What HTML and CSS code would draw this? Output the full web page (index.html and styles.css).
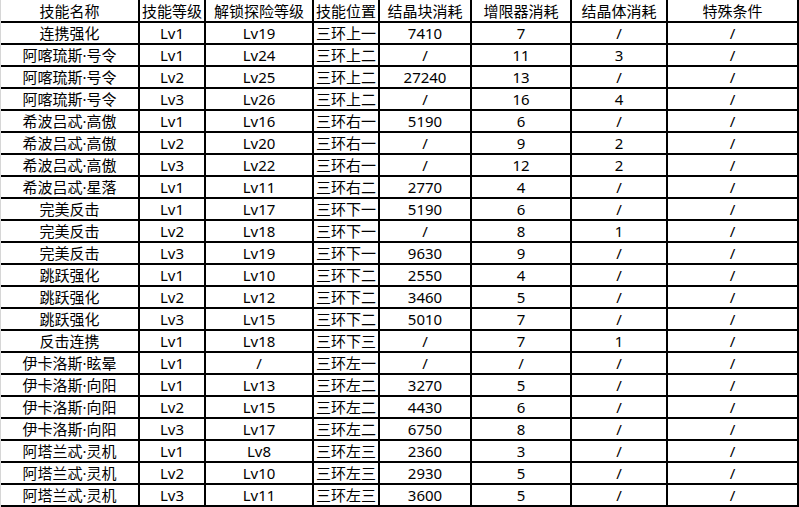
FILE: index.html
```html
<!DOCTYPE html>
<html lang="zh-CN">
<head>
<meta charset="utf-8">
<title>技能表</title>
<link rel="stylesheet" href="styles.css">
</head>
<body>
<div class="sheet">
<div class="c h">技能名称</div><div class="c h">技能等级</div><div class="c h">解锁探险等级</div><div class="c h">技能位置</div><div class="c h">结晶块消耗</div><div class="c h">增限器消耗</div><div class="c h">结晶体消耗</div><div class="c h">特殊条件</div>
<div class="c">连携强化</div><div class="c">Lv1</div><div class="c">Lv19</div><div class="c">三环上一</div><div class="c">7410</div><div class="c">7</div><div class="c">/</div><div class="c">/</div>
<div class="c">阿喀琉斯·号令</div><div class="c">Lv1</div><div class="c">Lv24</div><div class="c">三环上二</div><div class="c">/</div><div class="c">11</div><div class="c">3</div><div class="c">/</div>
<div class="c">阿喀琉斯·号令</div><div class="c">Lv2</div><div class="c">Lv25</div><div class="c">三环上二</div><div class="c">27240</div><div class="c">13</div><div class="c">/</div><div class="c">/</div>
<div class="c">阿喀琉斯·号令</div><div class="c">Lv3</div><div class="c">Lv26</div><div class="c">三环上二</div><div class="c">/</div><div class="c">16</div><div class="c">4</div><div class="c">/</div>
<div class="c">希波吕忒·高傲</div><div class="c">Lv1</div><div class="c">Lv16</div><div class="c">三环右一</div><div class="c">5190</div><div class="c">6</div><div class="c">/</div><div class="c">/</div>
<div class="c">希波吕忒·高傲</div><div class="c">Lv2</div><div class="c">Lv20</div><div class="c">三环右一</div><div class="c">/</div><div class="c">9</div><div class="c">2</div><div class="c">/</div>
<div class="c">希波吕忒·高傲</div><div class="c">Lv3</div><div class="c">Lv22</div><div class="c">三环右一</div><div class="c">/</div><div class="c">12</div><div class="c">2</div><div class="c">/</div>
<div class="c">希波吕忒·星落</div><div class="c">Lv1</div><div class="c">Lv11</div><div class="c">三环右二</div><div class="c">2770</div><div class="c">4</div><div class="c">/</div><div class="c">/</div>
<div class="c">完美反击</div><div class="c">Lv1</div><div class="c">Lv17</div><div class="c">三环下一</div><div class="c">5190</div><div class="c">6</div><div class="c">/</div><div class="c">/</div>
<div class="c">完美反击</div><div class="c">Lv2</div><div class="c">Lv18</div><div class="c">三环下一</div><div class="c">/</div><div class="c">8</div><div class="c">1</div><div class="c">/</div>
<div class="c">完美反击</div><div class="c">Lv3</div><div class="c">Lv19</div><div class="c">三环下一</div><div class="c">9630</div><div class="c">9</div><div class="c">/</div><div class="c">/</div>
<div class="c">跳跃强化</div><div class="c">Lv1</div><div class="c">Lv10</div><div class="c">三环下二</div><div class="c">2550</div><div class="c">4</div><div class="c">/</div><div class="c">/</div>
<div class="c">跳跃强化</div><div class="c">Lv2</div><div class="c">Lv12</div><div class="c">三环下二</div><div class="c">3460</div><div class="c">5</div><div class="c">/</div><div class="c">/</div>
<div class="c">跳跃强化</div><div class="c">Lv3</div><div class="c">Lv15</div><div class="c">三环下二</div><div class="c">5010</div><div class="c">7</div><div class="c">/</div><div class="c">/</div>
<div class="c">反击连携</div><div class="c">Lv1</div><div class="c">Lv18</div><div class="c">三环下三</div><div class="c">/</div><div class="c">7</div><div class="c">1</div><div class="c">/</div>
<div class="c">伊卡洛斯·眩晕</div><div class="c">Lv1</div><div class="c">/</div><div class="c">三环左一</div><div class="c">/</div><div class="c">/</div><div class="c">/</div><div class="c">/</div>
<div class="c">伊卡洛斯·向阳</div><div class="c">Lv1</div><div class="c">Lv13</div><div class="c">三环左二</div><div class="c">3270</div><div class="c">5</div><div class="c">/</div><div class="c">/</div>
<div class="c">伊卡洛斯·向阳</div><div class="c">Lv2</div><div class="c">Lv15</div><div class="c">三环左二</div><div class="c">4430</div><div class="c">6</div><div class="c">/</div><div class="c">/</div>
<div class="c">伊卡洛斯·向阳</div><div class="c">Lv3</div><div class="c">Lv17</div><div class="c">三环左二</div><div class="c">6750</div><div class="c">8</div><div class="c">/</div><div class="c">/</div>
<div class="c">阿塔兰忒·灵机</div><div class="c">Lv1</div><div class="c">Lv8</div><div class="c">三环左三</div><div class="c">2360</div><div class="c">3</div><div class="c">/</div><div class="c">/</div>
<div class="c">阿塔兰忒·灵机</div><div class="c">Lv2</div><div class="c">Lv10</div><div class="c">三环左三</div><div class="c">2930</div><div class="c">5</div><div class="c">/</div><div class="c">/</div>
<div class="c">阿塔兰忒·灵机</div><div class="c">Lv3</div><div class="c">Lv11</div><div class="c">三环左三</div><div class="c">3600</div><div class="c">5</div><div class="c">/</div><div class="c">/</div>
</div>
</body>
</html>
```

FILE: styles.css
```css
html, body {
  margin: 0;
  padding: 0;
  background: #ffffff;
}

.sheet {
  display: grid;
  grid-template-columns: 137px 64px 106px 64px 90px 98px 94px 129px;
  grid-template-rows: 21px repeat(22, 20px);
  gap: 2px;
  padding: 0 2px 2px 0;
  border-left: 1px solid #d6d6d6;
  background: #000000;
  box-sizing: border-box;
  width: 799px;
  font-family: "Noto Sans", "Noto Sans CJK SC", sans-serif;
  font-size: 15px;
  color: #000000;
}

.c {
  background: #ffffff;
  display: flex;
  align-items: center;
  justify-content: center;
  white-space: nowrap;
  overflow: hidden;
  line-height: 20px;
}

.h {
  background: #ffffff;
}
```
